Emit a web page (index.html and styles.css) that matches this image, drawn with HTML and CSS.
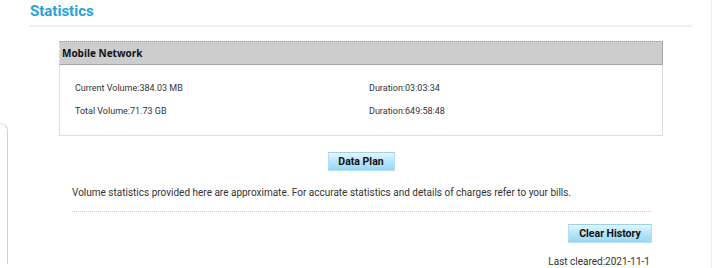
FILE: index.html
```html
<!DOCTYPE html>
<html lang="en">
<head>
  <meta charset="UTF-8">
  <meta name="viewport" content="width=device-width, initial-scale=1.0">
  <title>Statistics</title>
  <link rel="stylesheet" href="styles.css">
</head>
<body>
  <div class="page">
    <aside class="side-menu"></aside>

    <div class="content-frame">
      <h2 class="page-title">Statistics</h2>

      <div class="stat-panel">
        <div class="stat-header">Mobile Network</div>
        <div class="stat-body">
          <span>Current Volume:384.03 MB</span>
          <span>Duration:03:03:34</span>
          <span>Total Volume:71.73 GB</span>
          <span>Duration:649:58:48</span>
        </div>
      </div>

      <div class="btn-row center">
        <button class="blue-button">Data Plan</button>
      </div>

      <p class="notice">Volume statistics provided here are approximate. For accurate statistics and details of charges refer to your bills.</p>
      <div class="dotted-rule"></div>

      <div class="btn-row right">
        <button class="blue-button wide">Clear History</button>
      </div>
      <div class="last-cleared">Last cleared:2021-11-1</div>
    </div>
  </div>
</body>
</html>
```

FILE: styles.css
```css
body {
  margin: 0;
  padding: 0;
  background: #fff;
  font-family: Roboto, 'Liberation Sans', sans-serif;
  color: #333;
  overflow: hidden;
}
.page { display: flex; align-items: flex-start; height: 268px; overflow: hidden; }
.side-menu {
  flex: none;
  width: 7px;
  height: 140px;
  margin-top: 123px;
  border-top: 1px solid #e2e2e2;
  border-right: 1px solid #d2d2d2;
  border-top-right-radius: 8px;
}
.content-frame {
  flex: none;
  width: 662px;
  height: 268px;
  padding: 0 19px 0 22px;
  border-right: 1px solid #eeeeee;
}
.page-title {
  margin: 0;
  font-size: 15px;
  line-height: 22px;
  font-weight: bold;
  color: #27a3d9;
  padding-bottom: 3px;
  border-bottom: 2px solid #f1f1f1;
}
.stat-panel { margin: 14px 29px 0 29px; width: 604px; }
.stat-header {
  height: 22px;
  line-height: 22px;
  padding-left: 2px;
  background: #cdcdcd;
  border-top: 1px dotted #9a9a9a;
  border-bottom: 1px solid #a5a5a5;
  border-right: 1px solid #a5a5a5;
  border-left: 1px solid #dcdcdc;
  font-family: 'Open Sans', 'Liberation Sans', sans-serif;
  font-size: 10px;
  font-weight: bold;
  color: #111;
}
.stat-body {
  display: grid;
  grid-template-columns: 294px 1fr;
  padding: 12px 0 12px 15px;
  border: 1px solid #dddddd;
  border-top: none;
  font-size: 9px;
  line-height: 23px;
}
.btn-row { display: flex; margin-top: 16px; }
.btn-row.center { justify-content: center; }
.btn-row.right { justify-content: flex-end; margin-top: 12px; padding-right: 40px; }
.blue-button {
  height: 19px;
  width: 67px;
  padding: 0;
  border: 1px solid #b3def3;
  border-top: 1px dotted #9ccbe2;
  background: linear-gradient(to bottom, #e6f6fd, #b9e6fa 45%, #9ad7f4);
  font-family: Roboto, 'Liberation Sans', sans-serif;
  font-size: 10.5px;
  font-weight: bold;
  color: #111;
  cursor: pointer;
}
.blue-button.wide { width: 84px; }
.notice {
  margin: 13px 0 0 42px;
  font-size: 10px;
  line-height: 18px;
}
.dotted-rule {
  margin: 9px 41px 0 42px;
  border-bottom: 1px dotted #d0d0d0;
}
.last-cleared {
  text-align: right;
  padding-right: 42px;
  margin-top: 14px;
  font-size: 10px;
  line-height: 10px;
}
```
